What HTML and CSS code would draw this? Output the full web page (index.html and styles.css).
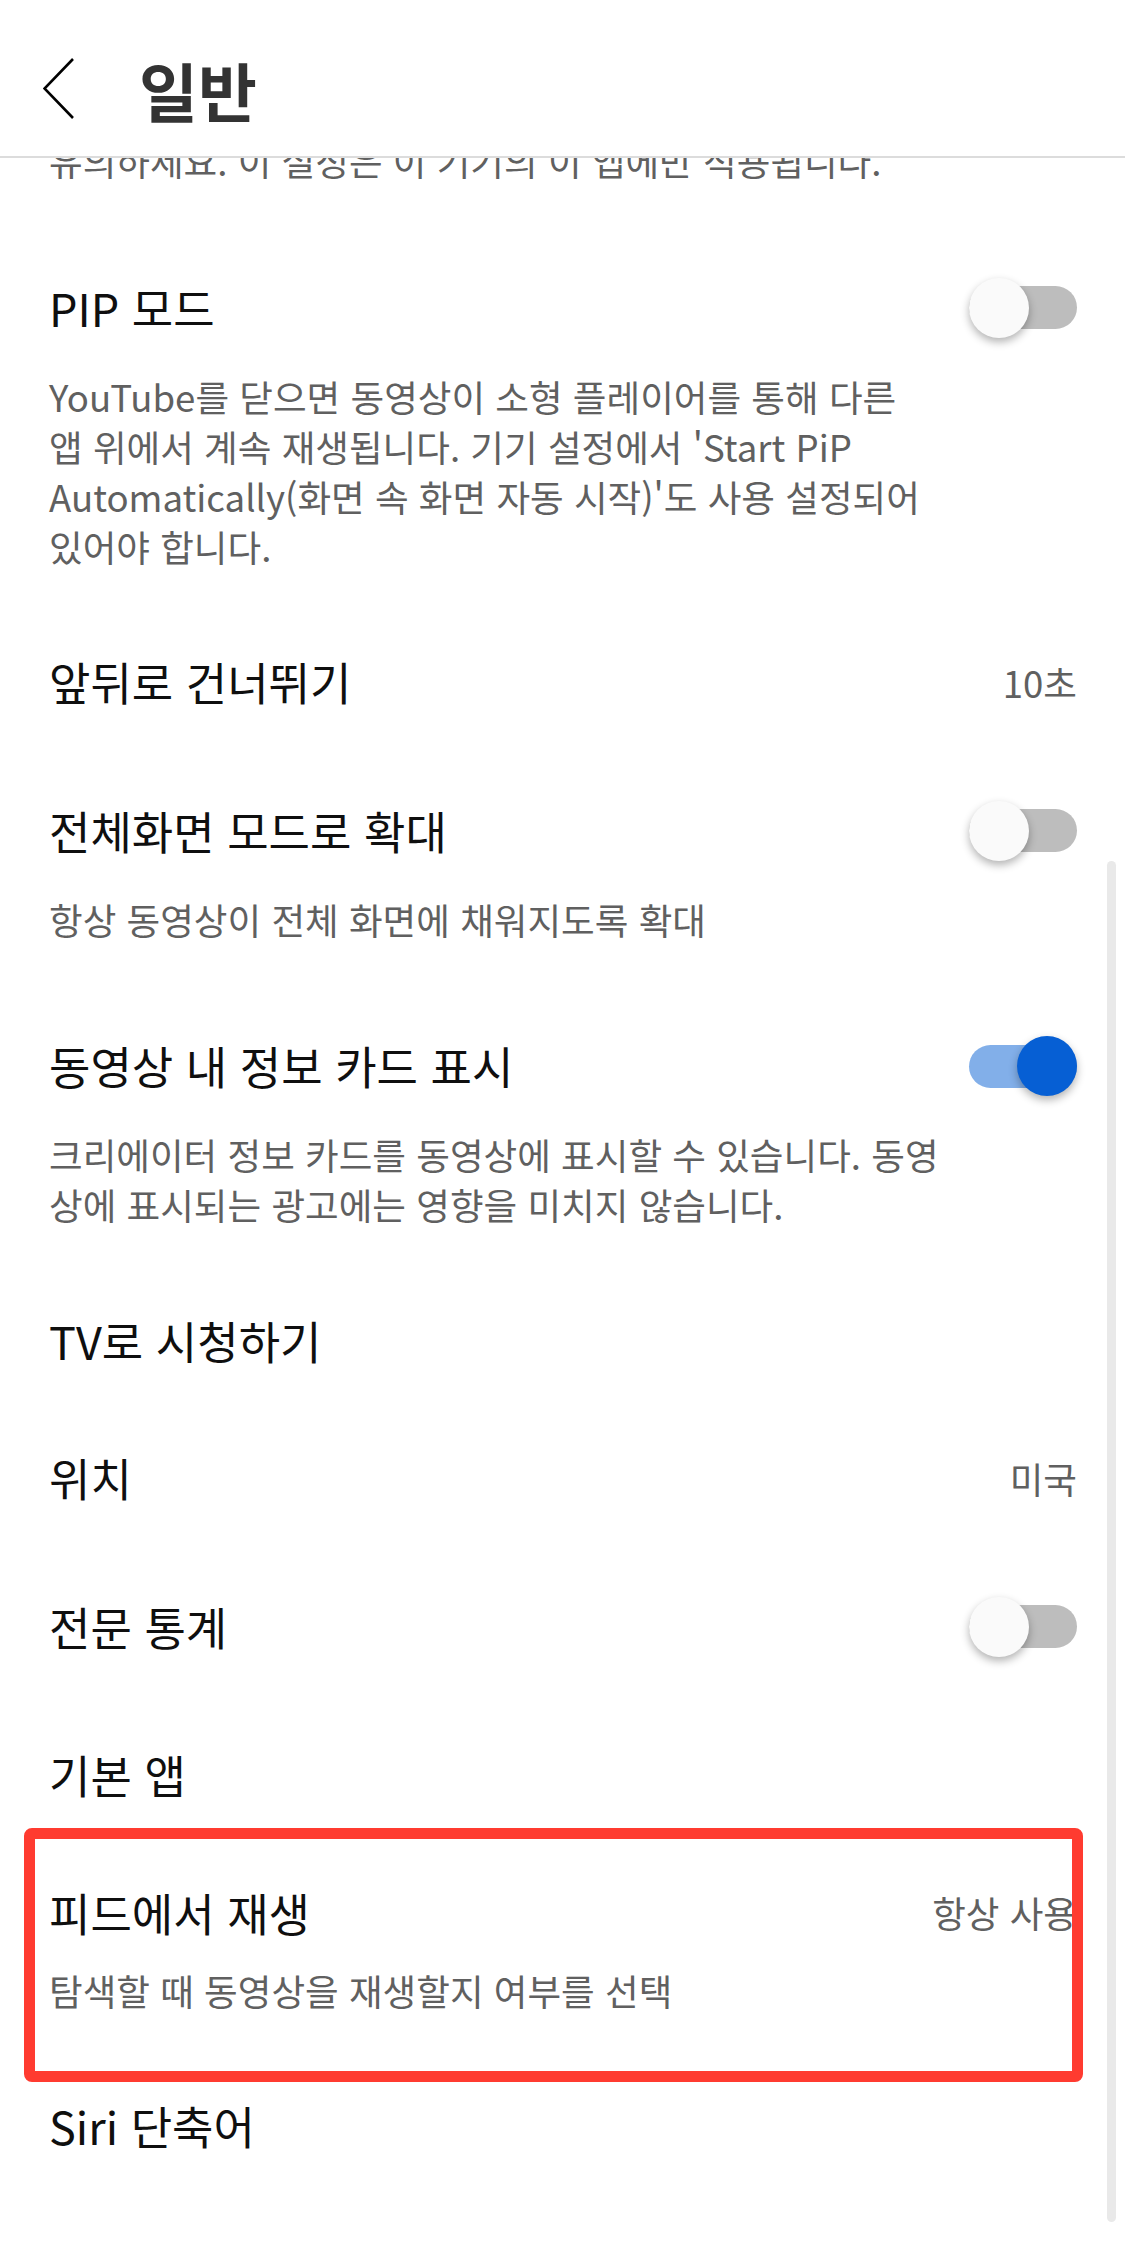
FILE: index.html
```html
<!DOCTYPE html>
<html lang="ko">
<head>
    <meta charset="UTF-8">
    <meta name="viewport" content="width=device-width, initial-scale=1.0">
    <title>일반 - 설정</title>
    <link rel="stylesheet" href="styles.css">
</head>
<body>
    <header class="topbar">
        <a class="back" href="#" aria-label="뒤로">
            <svg width="31" height="61" viewBox="0 0 31 61">
                <polyline points="30,1 1.5,30.5 30,60" fill="none" stroke="#000" stroke-width="2.6"/>
            </svg>
        </a>
        <h1>일반</h1>
    </header>

    <main class="scroll">
        <div class="list">
            <!-- end of the previous row, scrolled under the header -->
            <div class="row row-cut">
                <p class="desc">유의하세요. 이 설정은 이 기기의 이 앱에만 적용됩니다.</p>
            </div>

            <div class="row">
                <div class="row-head has-toggle">
                    <span class="label">PIP 모드</span>
                    <span class="switch"></span>
                </div>
                <p class="desc">YouTube를 닫으면 동영상이 소형 플레이어를 통해 다른<br>앱 위에서 계속 재생됩니다. 기기 설정에서 'Start PiP Automatically(화면 속 화면 자동 시작)'도 사용 설정되어 있어야 합니다.</p>
            </div>

            <div class="row">
                <div class="row-head">
                    <span class="label">앞뒤로 건너뛰기</span>
                    <span class="value">10초</span>
                </div>
            </div>

            <div class="row">
                <div class="row-head has-toggle">
                    <span class="label">전체화면 모드로 확대</span>
                    <span class="switch"></span>
                </div>
                <p class="desc">항상 동영상이 전체 화면에 채워지도록 확대</p>
            </div>

            <div class="row">
                <div class="row-head has-toggle">
                    <span class="label">동영상 내 정보 카드 표시</span>
                    <span class="switch on"></span>
                </div>
                <p class="desc">크리에이터 정보 카드를 동영상에 표시할 수 있습니다. 동영상에 표시되는 광고에는 영향을 미치지 않습니다.</p>
            </div>

            <div class="row">
                <div class="row-head">
                    <span class="label">TV로 시청하기</span>
                </div>
            </div>

            <div class="row">
                <div class="row-head">
                    <span class="label">위치</span>
                    <span class="value">미국</span>
                </div>
            </div>

            <div class="row">
                <div class="row-head has-toggle">
                    <span class="label">전문 통계</span>
                    <span class="switch"></span>
                </div>
            </div>

            <div class="row">
                <div class="row-head">
                    <span class="label">기본 앱</span>
                </div>
            </div>

            <div class="row marked">
                <div class="row-head">
                    <span class="label">피드에서 재생</span>
                    <span class="value">항상 사용</span>
                </div>
                <p class="desc">탐색할 때 동영상을 재생할지 여부를 선택</p>
            </div>

            <div class="row">
                <div class="row-head">
                    <span class="label">Siri 단축어</span>
                </div>
            </div>
        </div>

        <div class="scrollbar"></div>
    </main>
</body>
</html>
```

FILE: styles.css
```css
* {
    box-sizing: border-box;
}

body {
    margin: 0;
    width: 1125px;
    height: 2267px;
    display: flex;
    flex-direction: column;
    overflow: hidden;
    background-color: #fff;
    color: #0f0f0f;
    font-family: "Noto Sans CJK KR", "Noto Sans", sans-serif;
}

.topbar {
    flex-shrink: 0;
    height: 158px;
    padding: 21px 0 0 43px;
    display: flex;
    align-items: center;
    gap: 65px;
    border-bottom: 2px solid #dcdcdc;
    background-color: #fff;
}

.back {
    display: flex;
}

.topbar h1 {
    margin: 0;
    font-size: 64px;
    font-weight: 700;
    line-height: 1;
    color: #333;
}

.scroll {
    flex: 1;
    position: relative;
    overflow: hidden;
}

.list {
    margin-top: -22px;
}

.row {
    position: relative;
    padding: 41px 48px 42.5px 49px;
}

.row-cut {
    padding-top: 0;
}

.row-head {
    min-height: 54px;
    display: flex;
    align-items: center;
    justify-content: space-between;
}

.row-head.has-toggle {
    min-height: 76px;
}

.label {
    font-size: 45px;
    line-height: 54px;
}

.value {
    font-size: 36.6px;
    color: #606060;
}

.desc {
    margin: 26px 0 0;
    max-width: 895px;
    font-size: 36.6px;
    line-height: 50px;
    color: #606060;
}

.row-cut .desc {
    margin-top: 0;
}

/* material style switch */
.switch {
    position: relative;
    width: 108px;
    height: 43px;
    border-radius: 22px;
    background-color: #bdbdbd;
}

.switch::after {
    content: "";
    position: absolute;
    left: 0;
    top: -8.5px;
    width: 60px;
    height: 60px;
    border-radius: 50%;
    background-color: #fafafa;
    box-shadow: 0 4px 8px rgba(0, 0, 0, 0.3);
}

.switch.on {
    background-color: rgba(6, 95, 212, 0.5);
}

.switch.on::after {
    left: auto;
    right: 0;
    background-color: #065fd4;
}

/* red highlight drawn over the row */
.row.marked::after {
    content: "";
    position: absolute;
    top: -17px;
    bottom: -24px;
    left: 24px;
    right: 42px;
    border: 11px solid #ff3b30;
    border-radius: 8px;
}

.scrollbar {
    position: absolute;
    top: 703px;
    right: 9px;
    width: 9px;
    height: 1361px;
    border-radius: 5px;
    background-color: #e9e9e9;
}
```
